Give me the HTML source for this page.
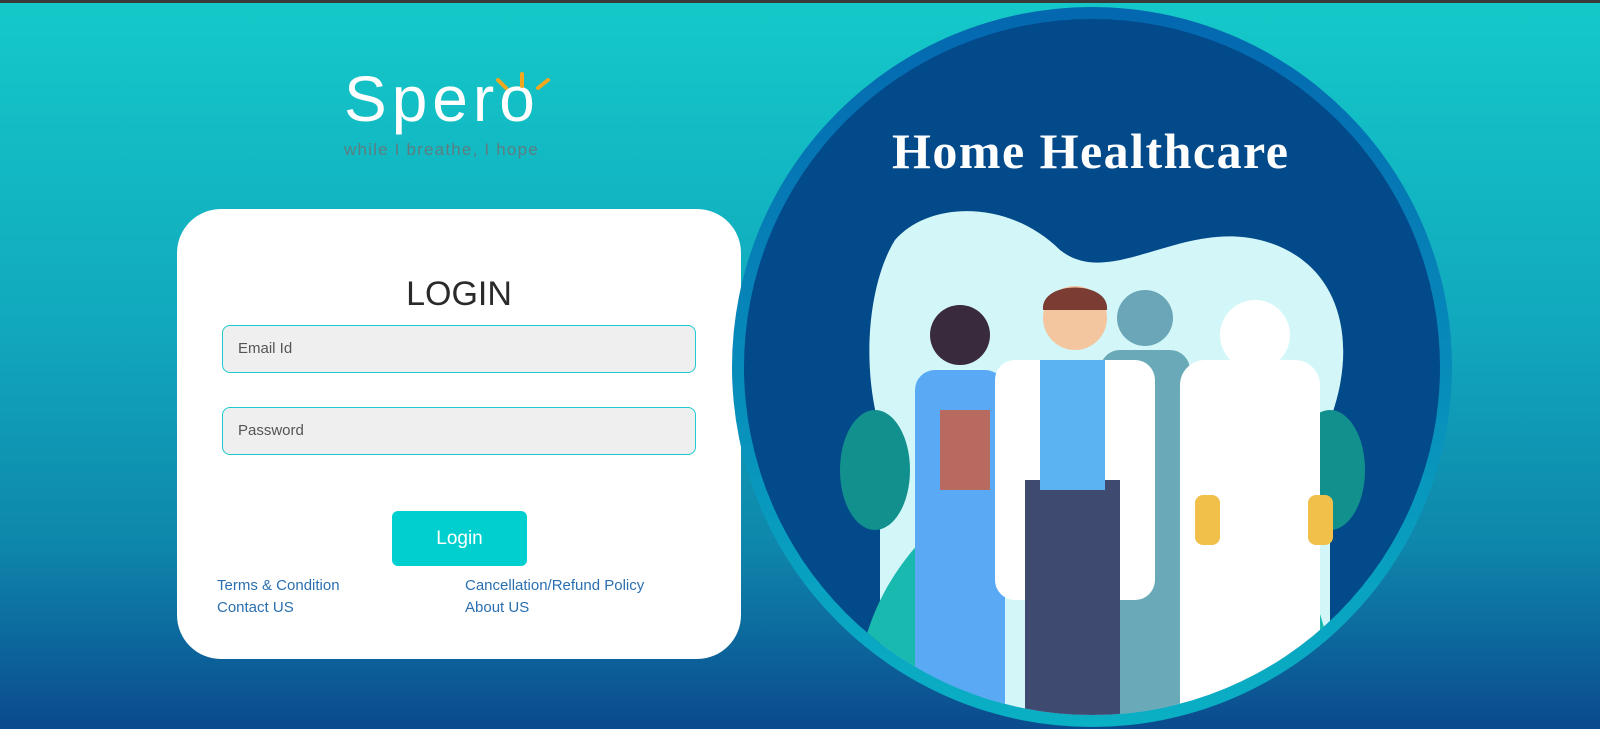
<!DOCTYPE html>
<html><head><style>
*{margin:0;padding:0;box-sizing:border-box}
body{width:1600px;height:729px;overflow:hidden;font-family:"Liberation Sans",sans-serif;background:linear-gradient(#14c9c9 0%,#11a8bd 45%,#0e86ab 75%,#0b4a8e 100%);position:relative}
.bar{position:absolute;top:0;left:0;width:1600px;height:3px;background:#3a3a3a}
.logo{position:absolute;left:344px;top:62px;color:#fff;font-size:64px;letter-spacing:5px}
.tag{position:absolute;left:344px;top:140px;color:#5d7d80;font-size:17px;letter-spacing:1.2px}
.card{position:absolute;left:177px;top:209px;width:564px;height:450px;background:#fff;border-radius:44px}
h1{position:absolute;top:66px;width:100%;text-align:center;font-weight:normal;font-size:34px;color:#2a2a2a}
.in{position:absolute;left:45px;width:474px;height:48px;border:1px solid #1ec9cf;border-radius:8px;background:#efefef;font-size:15px;color:#555;padding:14px 15px}
.btn{position:absolute;left:215px;top:302px;width:135px;height:55px;background:#00cfcf;border-radius:6px;color:#fff;font-size:19px;text-align:center;line-height:55px}
.l{position:absolute;font-size:15px;color:#2a6fb0}
</style></head><body>
<div class="bar"></div>
<div class="logo">Spero</div>
<svg style="position:absolute;left:490px;top:70px" width="62" height="30"><g stroke="#f2a81d" stroke-width="4" stroke-linecap="round"><line x1="32" y1="4" x2="32" y2="16"/><line x1="8" y1="10" x2="16" y2="18"/><line x1="58" y1="10" x2="48" y2="18"/></g></svg>
<div class="tag">while I breathe, I hope</div>
<div class="card">
<h1>LOGIN</h1>
<div class="in" style="top:116px">Email Id</div>
<div class="in" style="top:198px">Password</div>
<div class="btn">Login</div>
<div class="l" style="left:40px;top:368px">Terms &amp; Condition</div>
<div class="l" style="left:288px;top:368px">Cancellation/Refund Policy</div>
<div class="l" style="left:40px;top:390px">Contact US</div>
<div class="l" style="left:288px;top:390px">About US</div>
</div>
<svg style="position:absolute;left:0;top:0" width="1600" height="729">
<defs><clipPath id="c"><circle cx="1092" cy="367" r="348"/></clipPath>
<linearGradient id="o" x1="0" y1="0" x2="0" y2="1"><stop offset="0" stop-color="#0467b0"/><stop offset="1" stop-color="#0ab0c4"/></linearGradient></defs>
<circle cx="1092" cy="367" r="360" fill="url(#o)"/>
<circle cx="1092" cy="367" r="348" fill="#034a8a"/>
<g clip-path="url(#c)">
<path d="M895 240 C930 200 1010 200 1060 250 C1110 290 1180 220 1260 240 C1340 260 1360 340 1330 420 L1330 729 L880 729 L880 430 C860 360 870 280 895 240Z" fill="#d3f7f8"/>
<path d="M850 729 C860 600 900 560 960 500 L980 729Z" fill="#19b9b0"/>
<path d="M1340 729 C1330 600 1300 560 1260 520 L1240 729Z" fill="#19b9b0"/>
<ellipse cx="875" cy="470" rx="35" ry="60" fill="#12908e"/>
<ellipse cx="1330" cy="470" rx="35" ry="60" fill="#12908e"/>
<rect x="915" y="370" width="90" height="360" rx="20" fill="#5aa9f5"/>
<circle cx="960" cy="335" r="30" fill="#3a2a3d"/>
<rect x="940" y="410" width="50" height="80" fill="#b96a60"/>
<rect x="1100" y="350" width="90" height="380" rx="20" fill="#6aaab8"/>
<circle cx="1145" cy="318" r="28" fill="#6aa6b8"/>
<rect x="995" y="360" width="160" height="240" rx="20" fill="#fff"/>
<rect x="1025" y="480" width="95" height="250" fill="#3e4a70"/>
<rect x="1040" y="360" width="65" height="130" fill="#5bb3f2"/>
<circle cx="1075" cy="318" r="32" fill="#f3c6a0"/>
<path d="M1043 310 C1040 280 1110 280 1107 310Z" fill="#7b3c33"/>
<rect x="1180" y="360" width="140" height="370" rx="25" fill="#fff"/>
<circle cx="1255" cy="335" r="35" fill="#fff"/>
<rect x="1195" y="495" width="25" height="50" rx="8" fill="#f0c04a"/>
<rect x="1308" y="495" width="25" height="50" rx="8" fill="#f0c04a"/>
</g>
<text x="1090" y="168" text-anchor="middle" fill="#fff" font-family="Liberation Serif,serif" font-weight="bold" font-size="50" textLength="396">Home Healthcare</text>
</svg>
</body></html>
